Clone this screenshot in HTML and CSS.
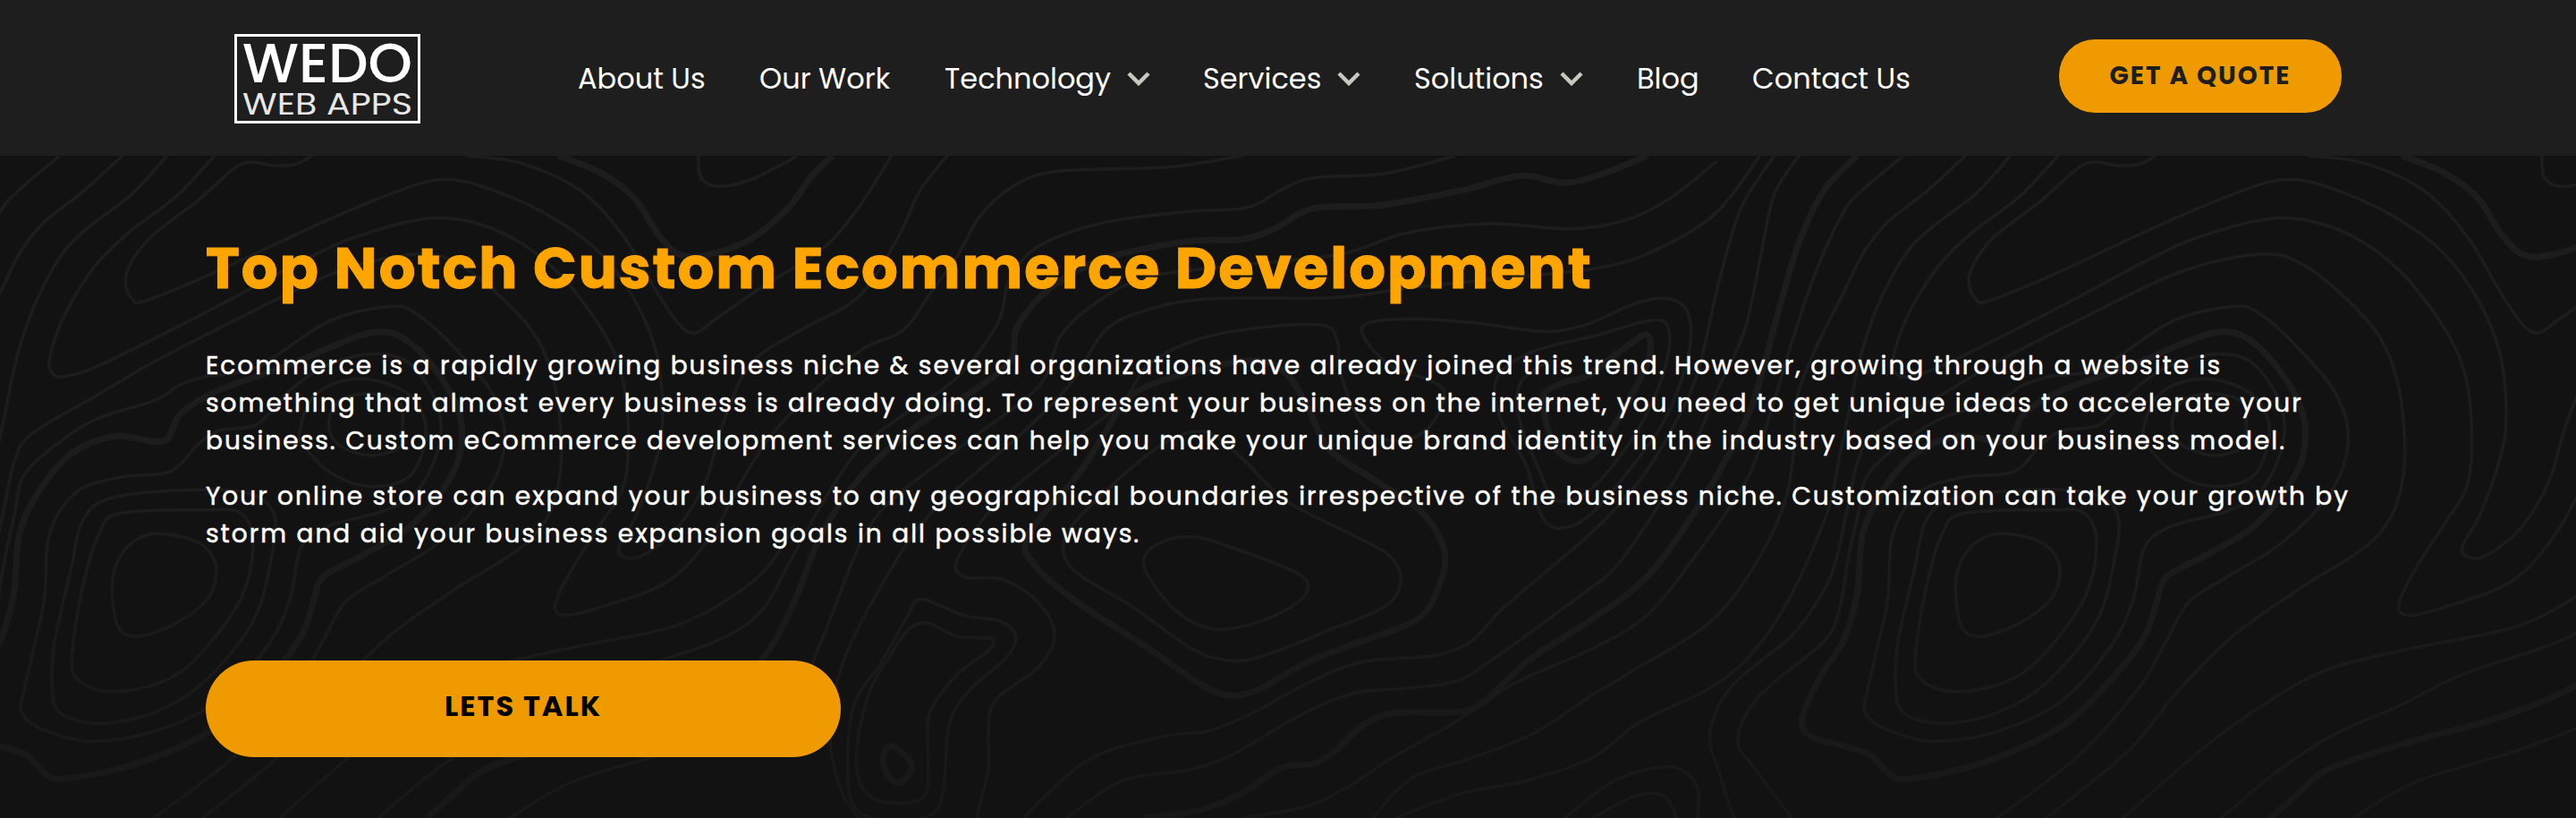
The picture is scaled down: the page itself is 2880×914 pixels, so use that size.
FILE: index.html
```html
<!DOCTYPE html>
<html lang="en">
<head>
    <meta charset="UTF-8">
    <meta name="viewport" content="width=device-width, initial-scale=1.0">
    <title>WEDO Web Apps - Custom Ecommerce Development</title>
    <link rel="stylesheet" href="styles.css">
</head>
<body>

    <header>
        <a href="#" class="logo">
            <svg width="208" height="100" viewBox="0 0 208 100" role="img" aria-label="WEDO Web Apps">
                <rect x="1.5" y="1.5" width="205" height="97" fill="none" stroke="#fff" stroke-width="3"/>
                <text x="9" y="54" class="logo-big" textLength="190" lengthAdjust="spacingAndGlyphs">WEDO</text>
                <text x="9" y="90" class="logo-small" textLength="190" lengthAdjust="spacingAndGlyphs">WEB APPS</text>
            </svg>
        </a>
        <nav>
            <a href="#">About Us</a>
            <a href="#">Our Work</a>
            <a href="#">Technology <svg class="chevron" viewBox="0 0 26 16"><path d="M2 2l11 11L24 2"/></svg></a>
            <a href="#">Services <svg class="chevron" viewBox="0 0 26 16"><path d="M2 2l11 11L24 2"/></svg></a>
            <a href="#">Solutions <svg class="chevron" viewBox="0 0 26 16"><path d="M2 2l11 11L24 2"/></svg></a>
            <a href="#">Blog</a>
            <a href="#">Contact Us</a>
        </nav>
        <a href="#" class="quote-btn">GET A QUOTE</a>
    </header>

    <section class="hero">
        <svg class="contours" id="contours" width="2880" height="740">
            <defs>
                <linearGradient id="lineFade" gradientUnits="userSpaceOnUse" x1="0" y1="0" x2="0" y2="740">
                    <stop offset="0" stop-color="#1d1d1d"/>
                    <stop offset="0.5" stop-color="#1c1c1c"/>
                    <stop offset="1" stop-color="#181818"/>
                </linearGradient>
                <g id="tile"></g>
            </defs>
            <use href="#tile"/>
            <use href="#tile" x="2061"/>
        </svg>
        <div class="content">
            <h1>Top Notch Custom Ecommerce Development</h1>
            <p>
                Ecommerce is a rapidly growing business niche &amp; several organizations have already joined this trend. However, growing through a website is<br>
                something that almost every business is already doing. To represent your business on the internet, you need to get unique ideas to accelerate your<br>
                business. Custom eCommerce development services can help you make your unique brand identity in the industry based on your business model.
            </p>
            <p>
                Your online store can expand your business to any geographical boundaries irrespective of the business niche. Customization can take your growth by<br>
                storm and aid your business expansion goals in all possible ways.
            </p>
            <a href="#" class="talk-btn">LETS TALK</a>
        </div>
    </section>

<script src="contours.js"></script>
</body>
</html>
```

FILE: contours.js
```js
// Contour lines of the hero background. One tile repeats every 2061px.
// t = thick line, c = closed line, p = points on a 3366 x 1568 grid
const lines = [
    // left hill
    { t: 1, c: 1, p: [[0,1150],[25,1040],[35,900],[70,800],[130,710],[210,668],[298,680],[330,615],[400,560],[520,505],[620,450],[685,423],[740,440],[800,520],[840,620],[838,720],[800,810],[740,890],[660,950],[590,1000],[572,1060],[550,1140],[490,1240],[400,1350],[260,1435],[120,1475],[80,1460],[50,1420],[0,1398],[-60,1375],[-75,1330],[-40,1230]] },
    { c: 1, p: [[40,1320],[45,1260],[80,1060],[90,900],[140,800],[220,765],[310,752],[360,690],[400,655],[470,640],[530,560],[600,500],[685,475],[750,500],[800,600],[800,700],[760,800],[700,845],[600,880],[550,930],[530,1050],[490,1160],[400,1290],[290,1360],[170,1387],[80,1360]] },
    { c: 1, p: [[95,1260],[100,1150],[130,980],[150,870],[200,815],[340,795],[450,802],[500,850],[495,960],[460,1110],[370,1250],[280,1320],[180,1345],[110,1320]] },
    { c: 1, p: [[132,1180],[150,1030],[180,900],[220,850],[380,842],[440,850],[462,920],[440,1050],[360,1190],[290,1250],[200,1270],[140,1240]] },
    { c: 1, p: [[205,1020],[220,950],[260,905],[310,900],[370,925],[395,980],[380,1050],[320,1110],[250,1140],[215,1115]] },
    { c: 1, p: [[600,640],[620,585],[675,568],[730,590],[735,650],[735,690],[680,714],[620,690]] },
    { c: 1, p: [[547,660],[570,580],[620,540],[690,538],[755,580],[778,660],[750,760],[680,787],[610,760],[560,700]] },
    { p: [[280,1568],[430,1420],[540,1260],[590,1150],[630,1060],[700,1000],[800,920],[890,800],[922,680],[900,570],[830,460],[760,380],[713,363],[600,398],[468,507],[376,528],[327,549],[283,584],[180,626],[109,682],[44,760],[27,850],[8,962],[-7,1074],[-36,1152],[-152,1278],[-193,1383],[-160,1454],[-94,1568]] },
    { p: [[370,1568],[520,1410],[610,1270],[710,1140],[830,1030],[970,910],[1020,780],[1020,600],[990,460],[930,360],[840,265],[762,240],[615,282],[436,391],[272,500],[180,570],[60,661],[27,725],[8,835],[-14,962],[-36,1032],[-94,1138],[-204,1257],[-244,1369],[-225,1468],[-200,1568]] },
    { p: [[570,8],[540,28],[500,31],[440,28],[365,110],[275,200],[235,270],[230,315],[242,345],[262,351],[381,289],[599,159],[740,85],[811,64],[880,80],[990,140],[1090,230],[1160,350],[1200,480],[1210,640],[1190,760],[1160,860],[1130,930],[1145,955],[1180,945],[1240,880],[1290,770],[1320,640],[1370,500],[1460,420],[1568,340],[1640,200],[1680,90],[1730,8]] },
    { p: [[392,8],[320,106],[234,190],[169,275],[114,394],[90,490],[96,520],[117,528],[191,496],[392,366],[555,254],[653,198],[789,155],[900,180],[1000,260],[1080,380],[1130,500],[1147,640],[1140,780],[1100,870],[1050,970],[1015,1060],[1030,1090],[1100,1070],[1220,1010],[1300,900],[1370,740],[1440,620],[1568,470],[1648,420],[1700,330],[1750,240],[1790,150],[1850,80],[1930,45],[2130,35],[2268,8]] },
    { p: [[305,8],[240,99],[131,212],[71,338],[33,472],[11,605],[-8,720],[-28,842],[-94,1039],[-167,1180],[-247,1264],[-371,1341],[-459,1426],[-580,1480],[-700,1510],[-818,1568]] },
    { p: [[223,8],[152,92],[82,163],[38,233],[0,331],[-50,460],[-85,580],[-92,720],[-112,842],[-167,983],[-247,1110],[-386,1222],[-459,1278],[-568,1370],[-688,1430],[-790,1475],[-860,1568]] },
    { p: [[109,8],[38,85],[0,141],[-50,280],[-90,430],[-130,600],[-165,740],[-211,842],[-269,948],[-357,1088],[-459,1169],[-600,1250],[-720,1350],[-830,1430],[-900,1490],[-980,1540],[-1098,1568]] },
    { t: 1, p: [[3391,8],[3331,90],[3286,210],[3251,360],[3226,480],[3201,590],[3166,690],[3097,842],[3009,998],[2907,1100],[2798,1190],[2738,1260],[2678,1315],[2548,1320],[2488,1350],[2438,1410],[2398,1440],[2338,1450],[2268,1510],[2188,1550],[2088,1568]] },
    { p: [[3285,8],[3240,100],[3216,240],[3186,420],[3136,560],[3090,700],[3024,842],[2951,976],[2890,1040],[2730,1190],[2660,1245],[2568,1262],[2468,1275],[2368,1330],[2248,1420],[2168,1455],[2048,1480],[1948,1568]] },
    { p: [[3214,8],[3136,140],[3040,220],[2928,270],[2718,300],[2568,320],[2438,342],[2208,345],[2098,370],[2018,420],[1958,540],[1868,660],[1700,850],[1610,1020],[1540,1200],[1515,1360],[1535,1500],[1568,1568]] },
    // middle slopes
    { p: [[1275,8],[1280,60],[1310,80],[1370,65],[1440,20],[1455,8]] },
    { t: 1, p: [[1020,8],[1100,50],[1160,110],[1200,190],[1240,240],[1290,242],[1370,205],[1440,130],[1480,60],[1520,8]] },
    { p: [[850,8],[950,25],[1060,90],[1140,200],[1200,330],[1240,405],[1270,425],[1310,390],[1400,310],[1500,230],[1568,130],[1628,8]] },
    { p: [[2658,8],[2528,50],[2398,60],[2338,90],[2278,130],[2168,140],[2018,165],[1898,220],[1843,300],[1823,400],[1748,530],[1648,620],[1568,700],[1500,830],[1440,970],[1390,1080],[1310,1150],[1130,1230],[1020,1300],[890,1375],[790,1460],[690,1568]] },
    { t: 1, p: [[3008,8],[2928,50],[2858,72],[2778,55],[2668,90],[2518,125],[2398,132],[2328,180],[2268,205],[2168,210],[2018,250],[1918,320],[1858,410],[1845,490],[1768,570],[1668,650],[1568,770],[1500,900],[1450,1060],[1400,1180],[1338,1255],[1200,1330],[1030,1390],[890,1450],[830,1510],[780,1568]] },
    { p: [[3136,20],[3048,110],[2968,160],[2868,180],[2718,168],[2568,190],[2448,240],[2268,265],[2108,290],[2018,340],[1938,430],[1898,550],[1768,680],[1628,820],[1568,930],[1500,1150],[1440,1290],[1250,1400],[1050,1480],[930,1568]] },
    { p: [[1450,880],[1400,980],[1320,1060],[1220,1120],[1050,1165],[890,1215],[780,1290],[660,1400],[510,1568]] },
    // centre hill
    { p: [[1783,1568],[1805,1450],[1805,1370],[1818,1290],[1898,1210],[1926,1130],[1888,1050],[1828,1005],[1763,1000],[1748,960],[1818,830],[1948,690],[2048,590],[2098,500],[2188,440],[2308,412],[2418,408],[2443,450],[2448,520],[2488,640],[2548,680],[2608,650],[2638,570],[2608,535],[2548,510],[2498,450],[2493,405],[2578,392],[2698,402],[2818,422],[2898,405],[2988,355],[3048,345],[3083,380],[3083,480],[3040,630],[2968,760],[2898,860],[2843,885],[2813,850],[2788,740],[2738,620],[2735,530],[2798,470],[2918,430],[3018,395],[3048,420],[3038,520],[2988,660],[2908,790],[2843,820],[2808,740],[2773,620],[2778,540],[2830,490]] },
    { t: 1, c: 1, p: [[2288,490],[2348,520],[2388,600],[2428,700],[2508,770],[2598,850],[2638,940],[2628,1020],[2588,1100],[2468,1160],[2388,1200],[2298,1265],[2238,1278],[2178,1240],[2088,1160],[1968,1060],[1888,970],[1878,900],[1968,760],[2018,660],[2068,570],[2168,520]] },
    { c: 1, p: [[2208,660],[2268,720],[2348,820],[2468,900],[2538,950],[2558,1010],[2528,1070],[2418,1130],[2308,1185],[2248,1197],[2178,1170],[2068,1070],[1958,980],[1948,900],[2018,800],[2088,720],[2148,670]] },
    { c: 1, p: [[2088,960],[2118,920],[2178,905],[2248,930],[2368,990],[2388,1030],[2358,1070],[2288,1110],[2218,1123],[2158,1090],[2108,1020]] },
    { t: 1, c: 1, p: [[2818,580],[2850,545],[2900,525],[2968,460],[3008,430],[3010,490],[2968,600],[2918,700],[2878,728],[2838,690]] },
    { c: 1, p: [[1683,1052],[1758,1090],[1828,1105],[1855,1140],[1838,1190],[1768,1270],[1733,1350],[1723,1500],[1700,1560],[1620,1575],[1560,1540],[1548,1440],[1560,1300],[1610,1200],[1658,1090]] },
    { c: 1, p: [[1693,1108],[1748,1140],[1808,1145],[1808,1170],[1748,1230],[1698,1320],[1695,1420],[1693,1500],[1668,1530],[1608,1528],[1572,1490],[1565,1400],[1588,1270],[1628,1180],[1658,1125]] },
    { t: 1, c: 1, p: [[1628,1398],[1663,1435],[1658,1470],[1638,1485],[1618,1460],[1613,1420]] },
    // bottom right
    { p: [[1868,1568],[1988,1430],[2128,1375],[2208,1362],[2288,1320],[2388,1250],[2488,1200],[2618,1185],[2688,1150],[2748,1070],[2907,895],[2990,780],[3050,660],[3100,520],[3140,300],[3180,130],[3240,8]] },
    { p: [[2858,1568],[2948,1480],[3048,1447],[3098,1490],[3100,1568]] },
    { p: [[2908,1568],[2988,1515],[3040,1517],[3062,1568]] }
];

const SX = 0.6122, SY = 0.4745;

// smooth curve through the points
function curve(points, closed) {
    const pts = points.map(([x, y]) => [x * SX, (y - 8) * SY]);
    const n = pts.length;
    const at = i => closed ? pts[(i + n) % n] : pts[Math.max(0, Math.min(n - 1, i))];
    let d = 'M' + pts[0];
    for (let i = 0; i < (closed ? n : n - 1); i++) {
        const a = at(i - 1), b = at(i), c = at(i + 1), e = at(i + 2);
        d += 'C' + [b[0] + (c[0] - a[0]) / 6, b[1] + (c[1] - a[1]) / 6,
                    c[0] - (e[0] - b[0]) / 6, c[1] - (e[1] - b[1]) / 6, c[0], c[1]];
    }
    return d;
}

const tile = document.getElementById('tile');
lines.forEach(line => {
    const path = document.createElementNS('http://www.w3.org/2000/svg', 'path');
    path.setAttribute('d', curve(line.p, line.c));
    path.setAttribute('class', line.t ? 'contour thick' : 'contour');
    tile.appendChild(path);
});
```

FILE: styles.css
```css
* {
    box-sizing: border-box;
}

body {
    margin: 0;
    font-family: Poppins, Inter, sans-serif;
    background: #121212;
    color: #fff;
}

a {
    color: inherit;
    text-decoration: none;
}

/* HEADER */
header {
    height: 174px;
    display: flex;
    align-items: center;
    background: #1e1e1e;
    padding-left: 262px;
}

.logo svg {
    display: block;
    margin-top: 2px;
}

.logo-big {
    font-size: 63px;
    font-weight: 500;
    fill: #fff;
}

.logo-small {
    font-size: 34px;
    fill: #e8e8e8;
}

nav {
    display: grid;
    grid-template-columns: 203px 207px 289px 236px 249px 129px 343px;
    margin: 2px 0 0 176px;
    font-size: 32px;
}

nav a {
    display: flex;
    align-items: center;
    gap: 18px;
    white-space: nowrap;
}

.chevron {
    width: 26px;
    height: 16px;
    fill: none;
    stroke: #c8c8c0;
    stroke-width: 4.5;
}

.quote-btn {
    width: 316px;
    height: 82px;
    margin-bottom: 4px;
    border-radius: 40px;
    background: #ef9b00;
    color: #1e1e1e;
    font-size: 28px;
    font-weight: 700;
    letter-spacing: 2px;
    text-align: center;
    line-height: 82px;
}

/* HERO */
.hero {
    position: relative;
    height: 740px;
    overflow: hidden;
}

.contours {
    position: absolute;
    top: 0;
    left: 0;
}

.contour {
    fill: none;
    stroke: url(#lineFade);
    stroke-width: 3.5;
}

.thick {
    stroke-width: 7;
}

.content {
    position: relative;
    padding: 78px 230px 0;
}

h1 {
    margin: 0 0 40px;
    font-size: 64px;
    line-height: 96px;
    letter-spacing: 2px;
    color: #ffa500;
    -webkit-text-stroke: 1px #ffa500;
}

p {
    margin: 0 0 20px;
    font-size: 28px;
    line-height: 42px;
    letter-spacing: 2px;
    white-space: nowrap;
    -webkit-text-stroke: 0.5px #fff; /* a touch heavier on the dark background */
}

.talk-btn {
    display: block;
    width: 710px;
    height: 108px;
    margin-top: 120px;
    border-radius: 54px;
    background: #ef9b00;
    color: #000;
    font-size: 32px;
    font-weight: 700;
    letter-spacing: 2px;
    line-height: 102px;
    text-align: center;
}
```
